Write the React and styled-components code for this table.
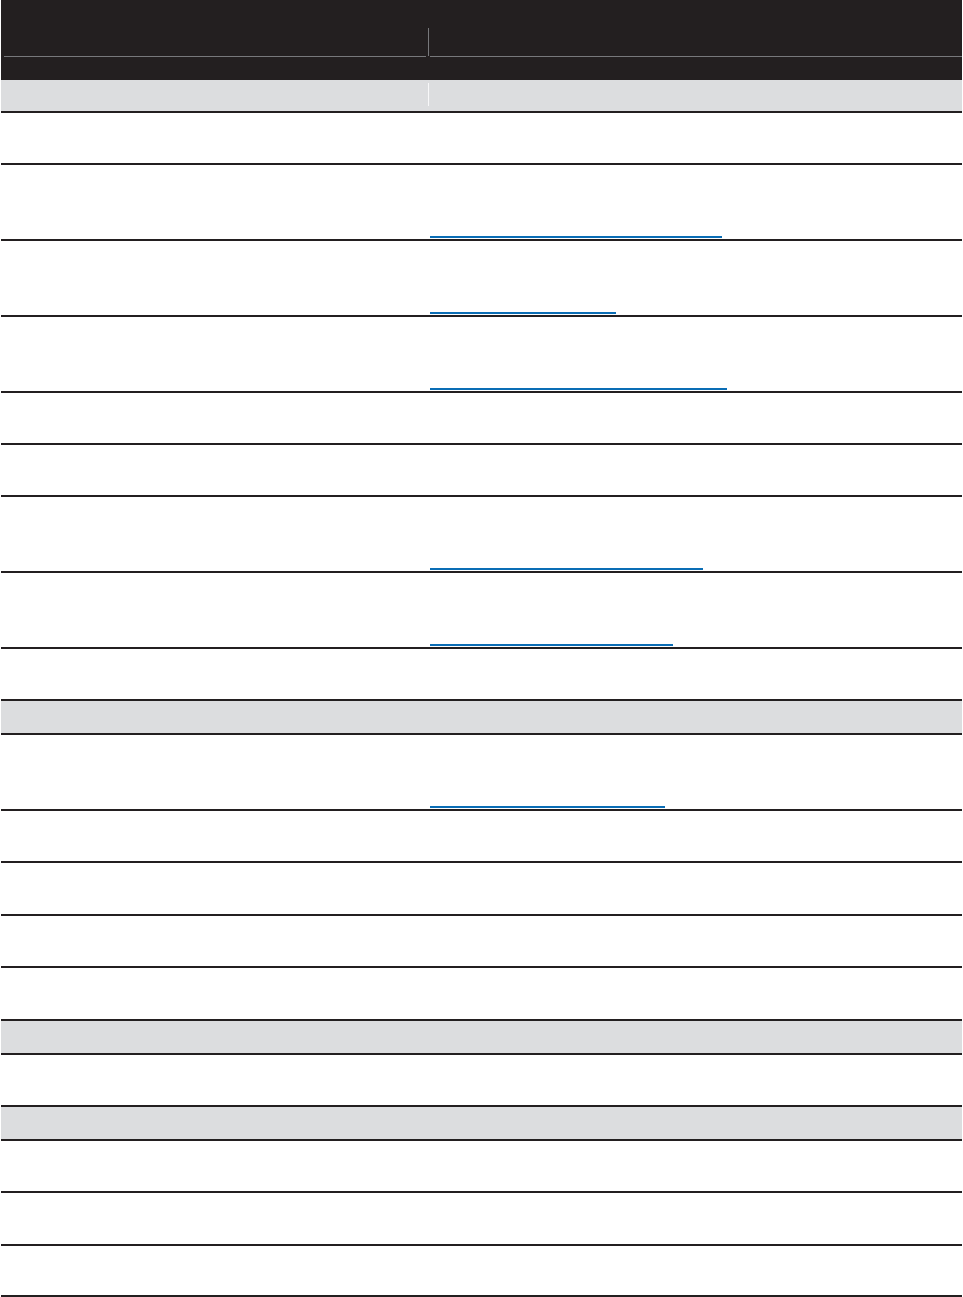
import React from 'react'
import styled, { createGlobalStyle } from 'styled-components';

const GlobalStyle = createGlobalStyle`
    html, body {
        margin: 0;
        padding: 0;
        background: #ffffff;
        font-family: "Liberation Sans", Arial, sans-serif;
    }
`;

const ink = '#231f20';
const band = '#dcdddf';
const linkBlue = '#0a6db5';

const Table = styled.div`
    width: 961px;
    margin-left: 1px;
    display: flex;
    flex-direction: column;
`;

const Head = styled.div`
    height: 80px;
    background: ${ink};
    display: grid;
    grid-template-columns: 428px 1fr;
    grid-template-rows: 28px 28px 1px 1fr;
`;

const HeadDivider = styled.div`
    grid-column: 1;
    grid-row: 2;
    justify-self: end;
    width: 1px;
    background: #77787b;
`;

const HeadRule = styled.div`
    grid-row: 3;
    grid-column: ${p => p.$col};
    margin-left: ${p => p.$inset}px;
    margin-right: ${p => p.$gap}px;
    background: #77787b;
`;

const Row = styled.div`
    box-sizing: border-box;
    height: ${p => p.$h}px;
    display: grid;
    grid-template-columns: 428px 1fr;
    background: ${p => (p.$band ? band : '#ffffff')};
    border-bottom: 2px solid ${ink};
`;

const Cell = styled.div`
    position: relative;
    display: flex;
    align-items: flex-end;
    padding-bottom: 1px;
`;

const SoftDivider = styled.div`
    margin: 3px 0 4px auto;
    width: 1px;
    align-self: stretch;
    background: rgba(255, 255, 255, 0.8);
`;

const Link = styled.a`
    display: block;
    margin-left: 1px;
    width: ${p => p.$w}px;
    height: 0;
    border-bottom: 2px solid ${linkBlue};
`;

const rows = [
    { h: 52 },
    { h: 76, link: 292 },
    { h: 76, link: 186 },
    { h: 76, link: 297 },
    { h: 52 },
    { h: 52 },
    { h: 76, link: 273 },
    { h: 76, link: 243 },
    { h: 52 },
    { h: 34, band: true },
    { h: 76, link: 235 },
    { h: 52 },
    { h: 53 },
    { h: 52 },
    { h: 53 },
    { h: 34, band: true },
    { h: 52 },
    { h: 34, band: true },
    { h: 52 },
    { h: 53 },
    { h: 51 },
];

export default function App() {
    return (
        <>
            <GlobalStyle />
            <Table>
                <Head>
                    <HeadDivider />
                    <HeadRule $col={1} $inset={3} $gap={3} />
                    <HeadRule $col={2} $inset={1} $gap={0} />
                </Head>
                <Row $h={33} $band>
                    <Cell><SoftDivider /></Cell>
                    <Cell />
                </Row>
                {rows.map((r, i) => (
                    <Row key={i} $h={r.h} $band={r.band}>
                        <Cell />
                        <Cell>{r.link && <Link href="#" $w={r.link} />}</Cell>
                    </Row>
                ))}
            </Table>
        </>
    )
}
